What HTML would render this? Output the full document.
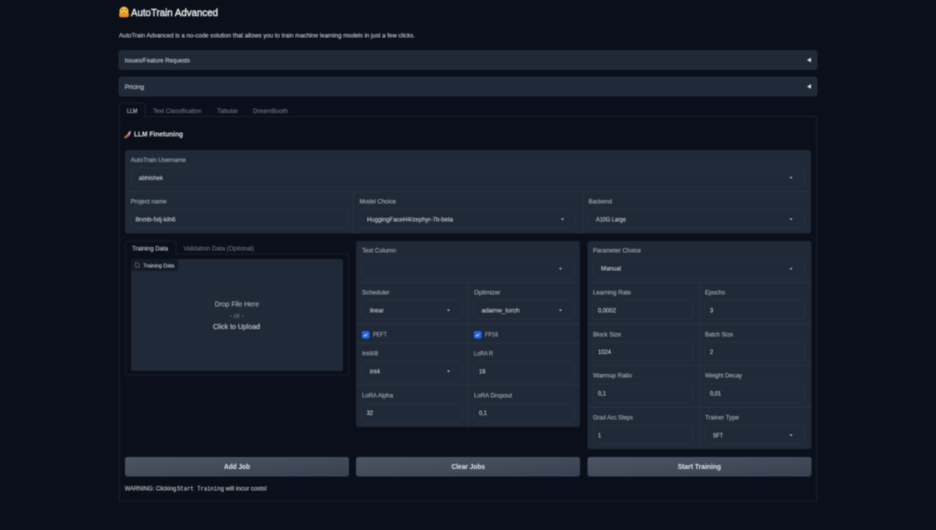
<!DOCTYPE html>
<html lang="en">
<head>
<meta charset="utf-8">
<title>AutoTrain Advanced</title>
<style>
html,body{margin:0;padding:0;background:#0b0f19;width:936px;height:530px;overflow:hidden}
svg{display:block;filter:blur(.4px)}
text{font-family:"Liberation Sans",sans-serif;font-size:6.7px;fill:#b4b9c2;transform:translateY(.3px)}
.l{fill:#b0b5be;stroke:#b0b5be;stroke-width:.08px}
.v{fill:#d0d3d9;stroke:#d0d3d9;stroke-width:.1px}
.d{fill:#767c88;stroke:#767c88;stroke-width:.06px}
.b{font-weight:bold;fill:#e5e7eb;font-size:7px}
.m{font-family:"Liberation Mono",monospace}
.p{fill:#1f2937}
.i{fill:#1f2937;stroke:#283241;stroke-width:.7}
.s{stroke:#2b3545;stroke-width:.7}
</style>
</head>
<body>
<svg width="936" height="530" viewBox="0 0 936 530" xmlns="http://www.w3.org/2000/svg">
<defs>
<linearGradient id="g" x1="0" y1="0" x2="1" y2="1"><stop offset="0" stop-color="#4b5563"/><stop offset="1" stop-color="#374151"/></linearGradient>
</defs>
<rect width="936" height="530" fill="#0b0f19"/>

<!-- Title -->
<circle cx="124" cy="11.200" r="4.600" fill="#f8bd3a"/>
<path d="M119 13.800q2.500-1.500 3.800.5q1.200-1 2.400 0q1.300-2 3.800-.5q.3 3.400-2.200 3.400h-5.600q-2.500 0-2.200-3.400z" fill="#ee8f2c"/>
<path d="M121.300 10.300q.8-.9 1.600 0M125.100 10.300q.8-.9 1.600 0" fill="none" stroke="#7a4a12" stroke-width=".7"/>
<path d="M122.500 12.600q1.500 1 3 0" fill="none" stroke="#7a4a12" stroke-width=".6"/>
<text x="131" y="15.500" textLength="87" lengthAdjust="spacingAndGlyphs" style="font-size:10.500px;fill:#e5e7eb;stroke:#e5e7eb;stroke-width:.45px">AutoTrain Advanced</text>
<text x="119" y="37" textLength="296" lengthAdjust="spacingAndGlyphs" class="v">AutoTrain Advanced is a no-code solution that allows you to train machine learning models in just a few clicks.</text>

<!-- Accordions -->
<rect x="119" y="50.500" width="698" height="19" rx="2.500" class="p" stroke="#2b3544" stroke-width=".6"/>
<text x="124.700" y="62.200" textLength="65.300" lengthAdjust="spacingAndGlyphs" class="v">Issues/Feature Requests</text>
<path d="M807 60l4-2.200v4.400z" fill="#e5e7eb"/>
<rect x="119" y="77" width="698" height="19" rx="2.500" class="p" stroke="#2b3544" stroke-width=".6"/>
<text x="124.700" y="88.700" textLength="19.300" lengthAdjust="spacingAndGlyphs" class="v">Pricing</text>
<path d="M807 86.500l4-2.200v4.400z" fill="#e5e7eb"/>

<!-- Tabs + outer border -->
<path d="M145 116.500H816.500V501H119.500V116.500" fill="none" stroke="#1d2533" stroke-width=".8"/>
<path d="M119.500 116.500V105.500q0-2.500 2.500-2.500H142.500q2.500 0 2.500 2.500V116.500" fill="none" stroke="#1d2533" stroke-width=".8"/>
<text x="127" y="112.800" textLength="10.300" lengthAdjust="spacingAndGlyphs" class="v">LLM</text>
<text x="153" y="112.800" textLength="48.500" lengthAdjust="spacingAndGlyphs" class="d">Text Classification</text>
<text x="217" y="112.800" textLength="21" lengthAdjust="spacingAndGlyphs" class="d">Tabular</text>
<text x="253" y="112.800" textLength="35" lengthAdjust="spacingAndGlyphs" class="d">DreamBooth</text>

<!-- Heading -->
<path d="M125.500 136l3.200-3.200 1.700 1.700-3.200 3.200z" fill="#dd5a55"/>
<path d="M128 132.800l3-2.300-.8 3.500-1 1z" fill="#a8bcdc"/>
<path d="M124.700 135.800l1.900 1.900-2 .8z" fill="#f0a030"/>
<text x="134" y="136.300" textLength="49" lengthAdjust="spacingAndGlyphs" class="b">LLM Finetuning</text>

<!-- Top panel -->
<rect x="125" y="150" width="686" height="83.500" rx="2.500" class="p"/>
<path d="M125 191.500H811M353.500 191.500V233.500M582.500 191.500V233.500" class="s" fill="none"/>
<text x="130.700" y="161.700" textLength="55.300" lengthAdjust="spacingAndGlyphs" class="l">AutoTrain Username</text>
<rect x="131" y="168" width="674" height="19" rx="2.500" class="i"/>
<text x="138.700" y="179.700" textLength="24.300" lengthAdjust="spacingAndGlyphs" class="v">abhishek</text>
<path d="M789.500 177l3 0-1.500 1.800z" fill="#c4c8cf"/>

<text x="130.700" y="203.200" textLength="36" lengthAdjust="spacingAndGlyphs" class="l">Project name</text>
<rect x="131" y="210" width="217" height="18.500" rx="2.500" class="i"/>
<text x="135.500" y="221.200" textLength="40" lengthAdjust="spacingAndGlyphs" class="v">8nmb-fxtj-kih6</text>
<text x="359.500" y="203.200" textLength="36.500" lengthAdjust="spacingAndGlyphs" class="l">Model Choice</text>
<rect x="359.500" y="210" width="216.500" height="18.500" rx="2.500" class="i"/>
<text x="367" y="221.200" textLength="86" lengthAdjust="spacingAndGlyphs" class="v">HuggingFaceH4/zephyr-7b-beta</text>
<path d="M561 218.500l3 0-1.500 1.800z" fill="#c4c8cf"/>
<text x="588.500" y="203.200" textLength="23.500" lengthAdjust="spacingAndGlyphs" class="l">Backend</text>
<rect x="588.500" y="210" width="216.500" height="18.500" rx="2.500" class="i"/>
<text x="596" y="221.200" textLength="30" lengthAdjust="spacingAndGlyphs" class="v">A10G Large</text>
<path d="M789.500 218.500l3 0-1.500 1.800z" fill="#c4c8cf"/>

<!-- Upload block -->
<path d="M176 254H348.500V375H125.500V254" fill="none" stroke="#1a2230" stroke-width=".8"/>
<path d="M125.500 254V243.500q0-2.300 2.300-2.300H173.500q2.500 0 2.500 2.500V254" fill="none" stroke="#1a2230" stroke-width=".8"/>
<text x="132" y="250.200" textLength="36" lengthAdjust="spacingAndGlyphs" class="v">Training Data</text>
<text x="183.500" y="250.200" textLength="70.500" lengthAdjust="spacingAndGlyphs" class="d">Validation Data (Optional)</text>
<rect x="131" y="259" width="212" height="112" rx="2.500" class="p"/>
<path d="M131 271V261.500q0-2.500 2.500-2.500H178V268.500q0 2.500-2.500 2.500z" fill="#141b28"/>
<path d="M135.500 262.800h2.500l1.200 1.200v3.300h-3.700z" fill="none" stroke="#8a919c" stroke-width=".5"/>
<text x="143.300" y="267.300" textLength="31" lengthAdjust="spacingAndGlyphs" class="v" style="font-size:5.800px">Training Data</text>
<text x="214.700" y="306.400" textLength="44.300" lengthAdjust="spacingAndGlyphs" class="l" style="font-size:7.200px">Drop File Here</text>
<text x="229.500" y="317.800" textLength="15" lengthAdjust="spacingAndGlyphs" class="d" style="font-size:7px">- or -</text>
<text x="213" y="328.900" textLength="47" lengthAdjust="spacingAndGlyphs" class="v" style="font-size:7.200px">Click to Upload</text>

<!-- Middle panel -->
<rect x="356" y="241" width="224" height="186" rx="2.500" class="p"/>
<path d="M356 282.500H580M356 324H580M356 343H580M356 385H580M468 282.500V427" class="s" fill="none"/>
<text x="362" y="252.200" textLength="34" lengthAdjust="spacingAndGlyphs" class="l">Text Column</text>
<rect x="362" y="258.500" width="212" height="19.500" rx="2.500" class="i"/>
<path d="M559 268l3 0-1.500 1.800z" fill="#c4c8cf"/>
<text x="362" y="294.200" textLength="27.500" lengthAdjust="spacingAndGlyphs" class="l">Scheduler</text>
<rect x="362" y="300.500" width="100" height="18.500" rx="2.500" class="i"/>
<text x="370" y="312.200" textLength="13.700" lengthAdjust="spacingAndGlyphs" class="v">linear</text>
<path d="M447 309.500l3 0-1.500 1.800z" fill="#c4c8cf"/>
<text x="474" y="294.200" textLength="26.500" lengthAdjust="spacingAndGlyphs" class="l">Optimizer</text>
<rect x="474" y="300.500" width="100" height="18.500" rx="2.500" class="i"/>
<text x="481.500" y="312.200" textLength="38" lengthAdjust="spacingAndGlyphs" class="v">adamw_torch</text>
<path d="M559 309.500l3 0-1.500 1.800z" fill="#c4c8cf"/>

<rect x="362" y="331" width="7.500" height="7.500" rx="1.500" fill="#2563eb"/>
<path d="M363.800 335.200l1.200.8 2.200-2" fill="none" stroke="#fff" stroke-width=".8"/>
<text x="373" y="336.400" textLength="14" lengthAdjust="spacingAndGlyphs" class="l">PEFT</text>
<rect x="474" y="331" width="7.500" height="7.500" rx="1.500" fill="#2563eb"/>
<path d="M475.800 335.200l1.200.8 2.200-2" fill="none" stroke="#fff" stroke-width=".8"/>
<text x="485" y="336.400" textLength="13" lengthAdjust="spacingAndGlyphs" class="l">FP16</text>

<text x="362" y="355.200" textLength="16" lengthAdjust="spacingAndGlyphs" class="l">Int4/8</text>
<rect x="362" y="362" width="100" height="19" rx="2.500" class="i"/>
<text x="370" y="373.200" textLength="10" lengthAdjust="spacingAndGlyphs" class="v">int4</text>
<path d="M447 370.500l3 0-1.500 1.800z" fill="#c4c8cf"/>
<text x="474" y="355.200" textLength="19" lengthAdjust="spacingAndGlyphs" class="l">LoRA R</text>
<rect x="474" y="362" width="100" height="19" rx="2.500" class="i"/>
<text x="479" y="373.200" textLength="6.500" lengthAdjust="spacingAndGlyphs" class="v">16</text>
<text x="362" y="397.200" textLength="31" lengthAdjust="spacingAndGlyphs" class="l">LoRA Alpha</text>
<rect x="362" y="403.500" width="100" height="18.500" rx="2.500" class="i"/>
<text x="366.700" y="414.700" textLength="6.500" lengthAdjust="spacingAndGlyphs" class="v">32</text>
<text x="474" y="397.200" textLength="38" lengthAdjust="spacingAndGlyphs" class="l">LoRA Dropout</text>
<rect x="474" y="403.500" width="100" height="18.500" rx="2.500" class="i"/>
<text x="479" y="414.700" textLength="8" lengthAdjust="spacingAndGlyphs" class="v">0,1</text>

<!-- Right panel -->
<rect x="587.500" y="241" width="224" height="208" rx="2.500" class="p"/>
<path d="M587.500 282.500H811.500M587.500 324H811.500M587.500 365.500H811.500M587.500 407H811.500M699.500 282.500V449" class="s" fill="none"/>
<text x="593" y="252.200" textLength="48" lengthAdjust="spacingAndGlyphs" class="l">Parameter Choice</text>
<rect x="593" y="258.500" width="212" height="19.500" rx="2.500" class="i"/>
<text x="601" y="270.200" textLength="20" lengthAdjust="spacingAndGlyphs" class="v">Manual</text>
<path d="M789.500 268l3 0-1.500 1.800z" fill="#c4c8cf"/>
<text x="593" y="294.200" textLength="38" lengthAdjust="spacingAndGlyphs" class="l">Learning Rate</text>
<rect x="593" y="300.500" width="100" height="18.500" rx="2.500" class="i"/>
<text x="598" y="312.200" textLength="18" lengthAdjust="spacingAndGlyphs" class="v">0,0002</text>
<text x="705" y="294.200" textLength="20" lengthAdjust="spacingAndGlyphs" class="l">Epochs</text>
<rect x="705" y="300.500" width="100" height="18.500" rx="2.500" class="i"/>
<text x="710" y="312.200" textLength="3.200" lengthAdjust="spacingAndGlyphs" class="v">3</text>
<text x="593" y="336.200" textLength="28" lengthAdjust="spacingAndGlyphs" class="l">Block Size</text>
<rect x="593" y="342" width="100" height="19" rx="2.500" class="i"/>
<text x="598" y="353.700" textLength="13" lengthAdjust="spacingAndGlyphs" class="v">1024</text>
<text x="705" y="336.200" textLength="28" lengthAdjust="spacingAndGlyphs" class="l">Batch Size</text>
<rect x="705" y="342" width="100" height="19" rx="2.500" class="i"/>
<text x="710" y="353.700" textLength="3.200" lengthAdjust="spacingAndGlyphs" class="v">2</text>
<text x="593" y="377.200" textLength="39" lengthAdjust="spacingAndGlyphs" class="l">Warmup Ratio</text>
<rect x="593" y="384" width="100" height="18.500" rx="2.500" class="i"/>
<text x="598" y="395.200" textLength="8" lengthAdjust="spacingAndGlyphs" class="v">0,1</text>
<text x="705" y="377.200" textLength="37" lengthAdjust="spacingAndGlyphs" class="l">Weight Decay</text>
<rect x="705" y="384" width="100" height="18.500" rx="2.500" class="i"/>
<text x="710" y="395.200" textLength="11" lengthAdjust="spacingAndGlyphs" class="v">0,01</text>
<text x="593" y="419.200" textLength="40" lengthAdjust="spacingAndGlyphs" class="l">Grad Acc Steps</text>
<rect x="593" y="425.500" width="100" height="18.500" rx="2.500" class="i"/>
<text x="598" y="437.200" textLength="3.200" lengthAdjust="spacingAndGlyphs" class="v">1</text>
<text x="705" y="419.200" textLength="34" lengthAdjust="spacingAndGlyphs" class="l">Trainer Type</text>
<rect x="705" y="425.500" width="100" height="18.500" rx="2.500" class="i"/>
<text x="713" y="437.200" textLength="10" lengthAdjust="spacingAndGlyphs" class="v">SFT</text>
<path d="M789.500 434.500l3 0-1.500 1.800z" fill="#c4c8cf"/>

<!-- Buttons -->
<rect x="125" y="457" width="224" height="19.500" rx="2.500" fill="url(#g)"/>
<text x="224" y="468.900" textLength="26" lengthAdjust="spacingAndGlyphs" class="b">Add Job</text>
<rect x="356" y="457" width="224" height="19.500" rx="2.500" fill="url(#g)"/>
<text x="451.500" y="468.900" textLength="33.500" lengthAdjust="spacingAndGlyphs" class="b">Clear Jobs</text>
<rect x="587.500" y="457" width="224" height="19.500" rx="2.500" fill="url(#g)"/>
<text x="677.700" y="468.900" textLength="43.300" lengthAdjust="spacingAndGlyphs" class="b">Start Training</text>

<!-- Warning -->
<text x="124.700" y="490.300" textLength="51.500" lengthAdjust="spacingAndGlyphs" class="v">WARNING: Clicking</text>
<text x="177" y="490.300" textLength="47" lengthAdjust="spacingAndGlyphs" class="v m" style="font-size:6px">Start Training</text>
<text x="225.500" y="490.300" textLength="41.500" lengthAdjust="spacingAndGlyphs" class="v">will incur costs!</text>
</svg>
</body>
</html>
